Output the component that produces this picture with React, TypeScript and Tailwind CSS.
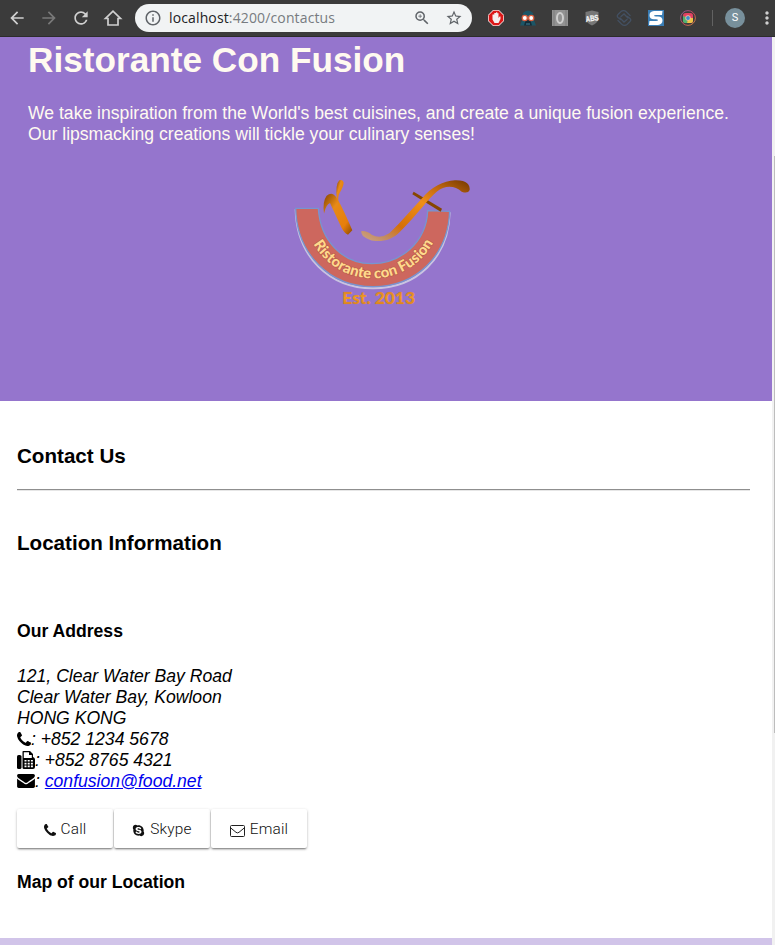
import type { ReactNode } from "react";
import { FaSkype } from "react-icons/fa";
import { MdArrowBack, MdArrowForward, MdRefresh, MdOutlineInfo, MdZoomIn, MdStarBorder, MdMoreVert } from "react-icons/md";

function PhoneIcon({ className }: { className: string }) {
  return (
    <svg viewBox="0 0 1408 1408" fill="currentColor" className={className}>
      <path d="M1408 1112q0 27-10 70.5t-21 68.5q-21 50-122 106-94 51-186 51-27 0-53-3.5t-57.5-12.5-47-14.5-55.5-20.5-49-18q-98-35-175-83-127-79-264-216t-216-264q-48-77-83-175-3-9-18-49t-20.5-55.5-14.5-47-12.5-57.5-3.5-53q0-92 51-186 56-101 106-122 25-11 68.5-21t70.5-10q14 0 21 3 18 6 53 76 11 19 30 54t35 63.5 31 53.5q3 4 17.5 25t21.5 35.5 7 28.5q0 20-28.5 50t-62 55-62 53-28.5 46q0 9 5 22.5t8.5 20.5 14 24 11.5 19q76 137 174 235t235 174q2 1 19 11.5t24 14 20.5 8.5 22.5 5q18 0 46-28.5t53-62 55-62 50-28.5q14 0 28.5 7t35.5 21.5 25 17.5q25 15 53.5 31t63.5 35 54 30q70 35 76 53 3 7 3 21z" />
    </svg>
  );
}

function FaxIcon() {
  return (
    <svg viewBox="0 0 18 18" className="mt-px h-[18px] w-[18px] shrink-0">
      <rect x="0" y="4" width="4.5" height="14" rx="1.6" />
      <path d="M5.5 0.8 Q5.5 0 6.3 0H13l3 3v3q2 0.5 2 2.5v7.500q0 2-2 2H7q-1.500 0-1.500-1.500z" />
      <path d="M6.8 1.200H12V4h2.800v3H6.800z" fill="#fff" />
      <path d="M7.500 9h2v1.600h-2zM10.700 9h2v1.600h-2zM13.900 9h2v1.600h-2zM7.500 11.800h2v1.600h-2zM10.700 11.800h2v1.600h-2zM13.900 11.800h2v1.600h-2zM7.500 14.600h2v1.600h-2zM10.700 14.600h2v1.600h-2zM13.900 14.600h2v1.600h-2z" fill="#fff" />
    </svg>
  );
}

function EnvelopeIcon() {
  return (
    <svg viewBox="0 256 1792 1408" className="mt-[3px] h-[14px] w-[18px] shrink-0">
      <path d="M1792 710v794q0 66-47 113t-113 47h-1472q-66 0-113-47t-47-113v-794q44 49 101 87 362 246 497 345 57 42 92.500 65.500t94.500 48 110 24.500h2q51 0 110-24.500t94.500-48 92.500-65.500q170-123 498-345 57-39 100-87zm0-294q0 79-49 151t-122 123q-376 261-468 325-10 7-42.500 31t-54 38.500-52 32.500-57.500 27-50 9h-2q-23 0-50-9t-57.500-27-52-32.500-54-38.500-42.500-31q-91-64-262-182.500t-205-142.500q-62-42-117-115.500t-55-136.500q0-78 41.500-130t118.500-52h1472q65 0 112.500 47t47.500 113z" />
    </svg>
  );
}

function Extensions() {
  return (
    <div className="ml-[16px] flex items-center gap-[16px]">
      <svg viewBox="0 0 16 16" className="size-4">
        <path d="M5 0h6l5 5v6l-5 5H5l-5-5V5z" fill="#f3dede" />
        <path d="M5.300 .8h5.400l4.500 4.500v5.400l-4.500 4.500H5.300L.8 10.700V5.300z" fill="#dc1717" />
        <path d="M4.500 4.500v5L6.500 13h4l2-4V6.500l-1 .1-1 1.500V3.200H9.300v-1H8v.7H6.300v1.600z" fill="#f5eeee" />
      </svg>
      <svg viewBox="0 0 16 16" className="size-4">
        <path d="M2 10 3 3q2-2.500 5-2.500T13 3l1 7 2 5.500H0z" fill="#1b5566" />
        <path d="M4 15.500 6 9h4l2 6.500z" fill="#142c38" />
        <circle cx="4.800" cy="8" r="3.200" fill="#dd6040" /><circle cx="11.200" cy="8" r="3.200" fill="#dd6040" />
        <circle cx="4.800" cy="8" r="1.900" fill="#fff" /><circle cx="11.200" cy="8" r="1.900" fill="#fff" />
        <path d="M6 14h4" stroke="#3f839b" />
      </svg>
      <svg viewBox="0 0 16 16" className="size-4">
        <path d="M0 0h16v16H0z" fill="#929292" />
        <path d="M2 0v16M14 0v16" stroke="#7d7d7d" />
        <ellipse cx="8" cy="8" rx="3" ry="5" fill="none" stroke="#cecece" strokeWidth="2" />
      </svg>
      <svg viewBox="0 0 16 16" className="size-4 overflow-visible">
        <path d="M8 .5 14.500 2v6q0 5-6.500 7.500Q1.500 13 1.500 8V2z" fill="#777" />
        <text x="1.500" y="11" fontSize="8" fontWeight="700" fill="#f4f4f4" stroke="#f4f4f4" strokeWidth=".3" transform="rotate(-8 8 8)" textLength="13" lengthAdjust="spacingAndGlyphs" className="font-['Liberation_Sans',sans-serif]">ABS</text>
      </svg>
      <svg viewBox="0 0 16 16" className="size-4" fill="none" stroke="#435062" strokeWidth="1.300" strokeLinecap="round">
        <path d="M4.500 9.500 2 7.500Q.5 6 2 4.500L5 1.500Q8-.5 10.500 2l3.500 3.500M11.500 6.500 14 8.500q1.500 1.500 0 3L11 14.500q-3 2-5.500-.5L2 10.500M5 6.500l3-2.500 4 4M11 9.500 8 12 4 8" />
      </svg>
      <svg viewBox="0 0 16 16" className="size-4">
        <path d="M0 0h16v16H0z" fill="#397db5" />
        <path d="M14.500 1 14 5H8q-2 0-2 .8t2 .8h2q4.500.2 4.500 4T10 15H1l.5-4H8q2 0 2-.8T8 9.300H6q-4.500-.2-4.500-4T6 1z" fill="#fff" />
      </svg>
      <svg viewBox="0 0 16 16" className="size-4">
        <defs><linearGradient id="ring" x2="1" y2="1"><stop stopColor="#795ba0" /><stop offset=".5" stopColor="#c64558" /><stop offset="1" stopColor="#c58a47" /></linearGradient></defs>
        <circle cx="8" cy="8" r="7.400" fill="none" stroke="url(#ring)" />
        <rect x="3" y="3" width="10" height="10" rx="2.500" fill="#e14161" />
        <path d="M8 8h5v3q0 2-2 2H7z" fill="#edc445" /><path d="M3 6 8 8l-1 5H5q-2 0-2-2z" fill="#4fb270" />
        <circle cx="8" cy="8" r="2.700" fill="#f2c0a0" />
        <circle cx="8" cy="8" r="1.900" fill="#3b8ed0" />
      </svg>
    </div>
  );
}

function BrowserBar() {
  return (
    <header className="flex h-[37px] items-center border-b border-[#2c2c2c] bg-[#3b3b3b] text-[#d0d0d0]">
      <MdArrowBack className="ml-[7px] size-5 shrink-0" />
      <MdArrowForward className="ml-[12px] size-5 shrink-0 text-[#797979]" />
      <MdRefresh className="ml-[12px] size-5 shrink-0" />
      <svg viewBox="0 0 20 20" className="ml-[12px] size-5 shrink-0" fill="none" stroke="currentColor" strokeWidth="1.700">
        <path d="M2.500 10.500H5V17h10v-6.500h2.500L10 3.200z" />
      </svg>
      <div className="ml-[12px] flex h-7 w-[337px] shrink-0 items-center rounded-full bg-[#f1f3f4] text-[#5f6368]">
        <MdOutlineInfo className="ml-[9px] size-[18px]" />
        <svg className="ml-[7px] h-[22px] w-[170px] font-['Open_Sans',sans-serif] text-[14px]">
          <text x="0" y="16" textLength="166" fill="#777b80"><tspan fill="#202124">localhost</tspan>:4200/contactus</text>
        </svg>
        <MdZoomIn className="ml-[74px] size-[18px]" />
        <MdStarBorder className="ml-[14px] size-[18px]" />
      </div>
      <Extensions />
      <div className="ml-[16px] h-4 w-px shrink-0 bg-[#626262]" />
      <div className="ml-[12px] flex size-5 shrink-0 items-center justify-center rounded-full bg-[#78909c] font-['Roboto',sans-serif] text-[11px] text-white">S</div>
      <MdMoreVert className="ml-[12px] size-5 shrink-0" />
    </header>
  );
}

function Logo() {
  return (
    <svg viewBox="0 0 585 420" className="mt-[25px] ml-[257px] h-[140px] w-[195px]">
      <defs>
        <linearGradient id="gold" x2="1" y2="1"><stop stopColor="#844300" /><stop offset=".35" stopColor="#e78a18" /><stop offset=".75" stopColor="#e67e0c" /><stop offset="1" stopColor="#894700" /></linearGradient>
        <linearGradient id="swash" x1="0" y1="1" x2="1" y2="0"><stop stopColor="#cda585" /><stop offset=".15" stopColor="#c38a5e" /><stop offset=".3" stopColor="#d56f08" /><stop offset=".6" stopColor="#ef8f18" /><stop offset=".78" stopColor="#c46a10" /><stop offset="1" stopColor="#733800" /></linearGradient>
        <linearGradient id="est" x2="0" y2="1"><stop stopColor="#d0752e" /><stop offset=".5" stopColor="#ef9b20" /><stop offset="1" stopColor="#d17820" /></linearGradient>
        <path id="curve" d="M57 118A207 207 0 0 0 471 118" />
      </defs>
      <path d="M32 118C35 260 133 355 264 355S491 264 494 127" fill="none" stroke="#c9c4e1" strokeWidth="6" />
      <path d="M32 115H100C106 214 174 281 260 281S424 218 428 122L494 124C489 258 393 350 264 350S35 253 32 115Z" fill="#cd675e" stroke="#7795cf" strokeWidth="4" />
      <text className="font-['Lato',sans-serif]" fontSize="44" fontWeight="900" fill="#ffd98c" stroke="#b9604a" strokeWidth="4" paintOrder="stroke">
        <textPath href="#curve" startOffset="109" textLength="436" lengthAdjust="spacingAndGlyphs">Ristorante con Fusion</textPath>
      </text>
      <path d="M117 131Q112 94 125 77 139 65 150 77 165 94 202 181L189 194Q178 190 170 174L135 99Q123 103 117 131Z" fill="url(#gold)" />
      <path d="M155 88Q151 42 163 31 174 27 176 38 175 51 164 68 158 79 160 101Z" fill="url(#gold)" />
      <path d="M386 65 471 116 467 125 382 73Z" fill="#874600" />
      <path d="M229 183Q245 181 260 194 Q285 208 313 190L340 163 410 86C440 50 475 33 510 31C545 30 556 45 554 60Q549 72 530 65C510 46 480 44 455 65C430 85 400 130 345 185C320 212 280 219 254 209Q225 198 229 183Z" fill="url(#swash)" />
      <text x="172" y="401" fontSize="50" fontWeight="900" textLength="218" lengthAdjust="spacingAndGlyphs" fill="url(#est)" stroke="#b37998" strokeWidth="2" paintOrder="stroke" className="font-['Lato',sans-serif]">Est. 2013</text>
    </svg>
  );
}

function ContactButton({ icon, children }: { icon: ReactNode; children: string }) {
  return (
    <button className="flex h-[39px] w-24 items-center justify-center gap-[5px] rounded-[2px] bg-white font-['Roboto',sans-serif] text-[15.400px] font-light tracking-[0.200px] text-[#101010] shadow-[0_2px_2px_-1px_rgba(0,0,0,0.4),0_1px_3px_rgba(0,0,0,0.25)]">
      {icon}
      <span className="pt-[2px]">{children}</span>
    </button>
  );
}

export default function App() {
  return (
    <div className="h-[945px] overflow-hidden bg-white font-['Liberation_Sans',Arial,sans-serif] text-black">
      <BrowserBar />
      <div className="flex h-[908px]">
        <main className="w-[772px] shrink-0">
          <section className="h-[364px] bg-[#9575cd] pl-7 text-[floralwhite]">
            <h1 className="pt-[2px] text-[35.200px] leading-[41px] font-bold">Ristorante Con Fusion</h1>
            <p className="mt-[23px] text-[17.600px] leading-[21px]">We take inspiration from the World's best cuisines, and create a unique fusion experience.<br />Our lipsmacking creations will tickle your culinary senses!</p>
            <Logo />
          </section>
          <section className="h-[537px] pl-[17px]">
            <h3 className="pt-[42px] text-[20.600px] leading-[25px] font-bold">Contact Us</h3>
            <hr className="mt-[21px] h-[2px] w-[733px] border-t border-b border-t-[#8f8f8f] border-b-[#e6e6e6]" />
            <h3 className="mt-[39px] text-[20.600px] leading-[25px] font-bold">Location Information</h3>
            <h4 className="mt-[66px] text-[17.600px] leading-[21px] font-bold">Our Address</h4>
            <address className="mt-[24px] text-[17.600px] leading-[21px]">
              121, Clear Water Bay Road<br />Clear Water Bay, Kowloon<br />HONG KONG
              <div className="flex h-[21px]"><PhoneIcon className="mt-[3px] h-[14px] w-[14px]" /><span>: +852 1234 5678</span></div>
              <div className="flex h-[21px]"><FaxIcon /><span>: +852 8765 4321</span></div>
              <div className="flex h-[21px]"><EnvelopeIcon /><span>: <a href="mailto:confusion@food.net" className="text-[#0000ee] underline">confusion@food.net</a></span></div>
            </address>
            <div className="mt-[17px] flex gap-px">
              <ContactButton icon={<PhoneIcon className="mt-[3px] h-[12px] w-[12px]" />}>Call</ContactButton>
              <ContactButton icon={<FaSkype className="mt-[3px] size-[13px]" />}>Skype</ContactButton>
              <ContactButton
                icon={
                  <svg viewBox="0 0 15 12" className="mt-[5px] h-[12px] w-[15px]" fill="none" stroke="#202020">
                    <rect x=".5" y=".5" width="14" height="11" rx="1" />
                    <path d="M.8 3 6 7.300q1.500 1.200 3 0L14.200 3" />
                  </svg>
                }
              >
                Email
              </ContactButton>
            </div>
            <h4 className="mt-[24px] text-[17.600px] leading-[21px] font-bold">Map of our Location</h4>
          </section>
          <footer className="h-[7px] bg-[#d1c4e9]" />
        </main>
        <div className="w-[3px] bg-[#f1f1f1] pt-[119px]"><div className="ml-[2px] h-[577px] w-px bg-[#bdbdbd]" /></div>
      </div>
    </div>
  );
}
